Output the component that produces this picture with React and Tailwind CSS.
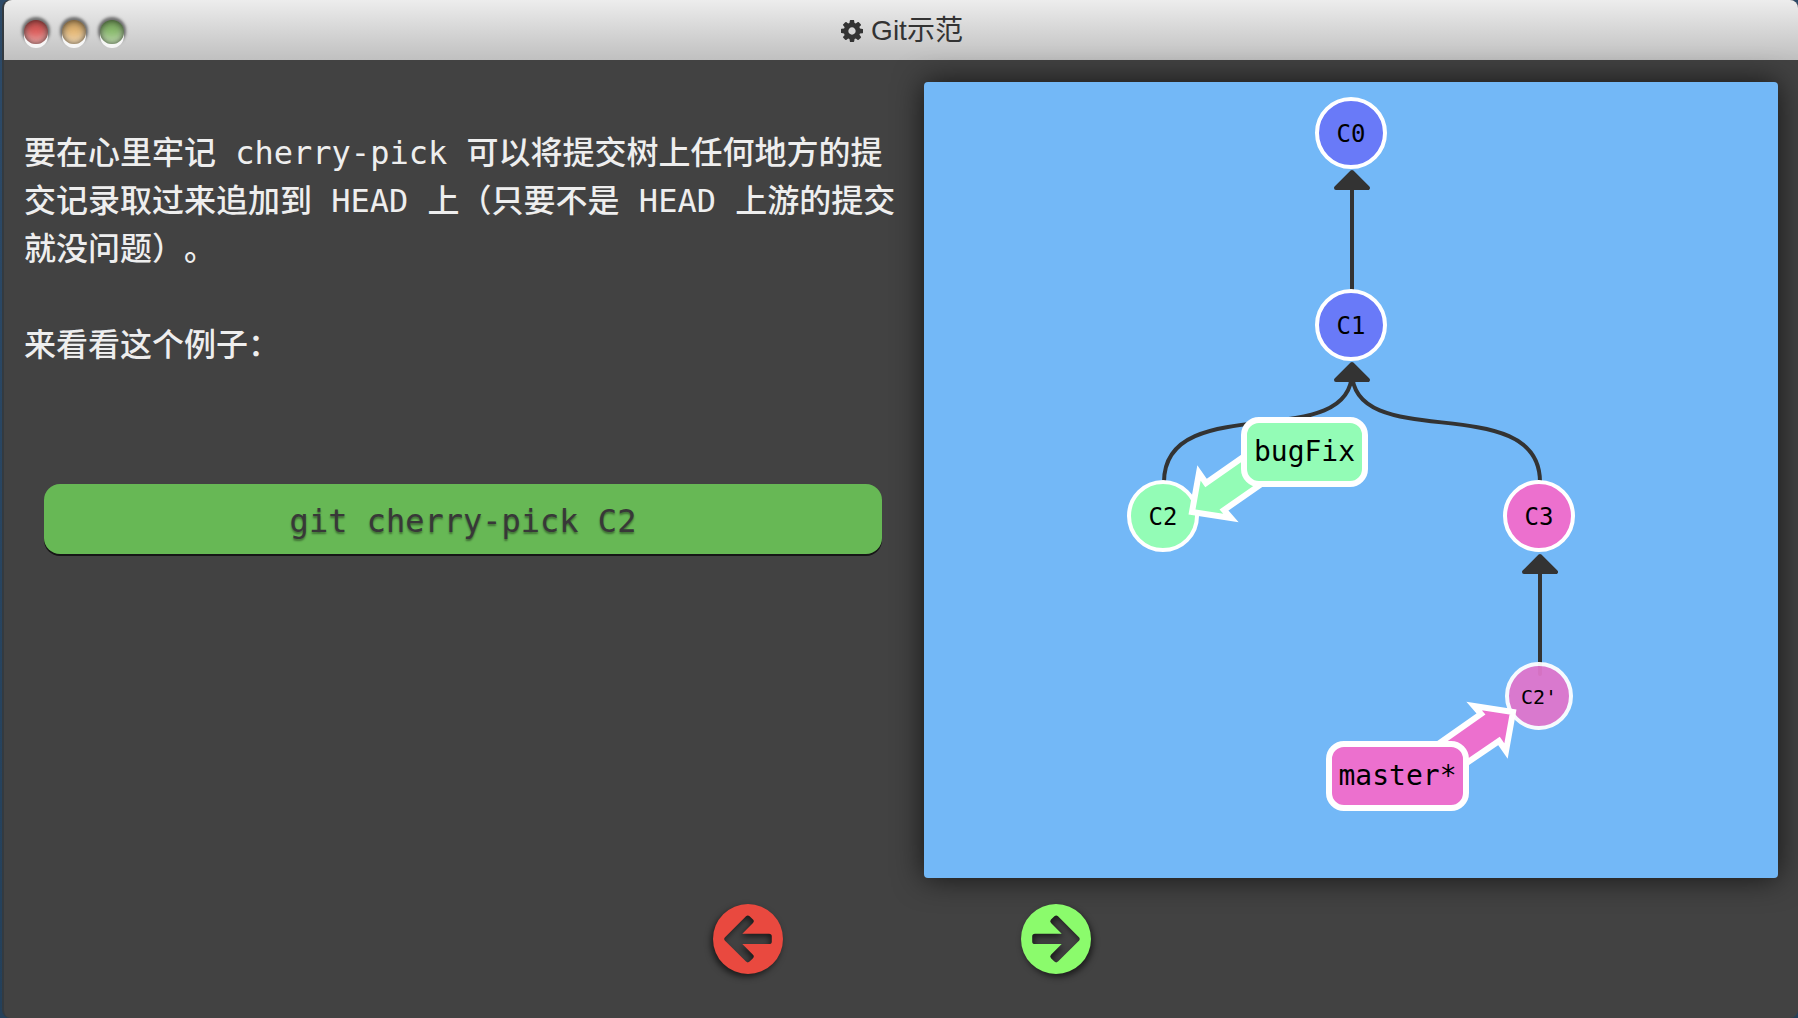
const COG =
  'M1152 896q0-106-75-181t-181-75-181 75-75 181 75 181 181 75 181-75 75-181zm512-109v222q0 12-8 23t-20 13l-185 28q-19 54-39 91 35 50 107 138 10 12 10 25t-9 23q-27 37-99 108t-94 71q-12 0-26-9l-138-108q-44 23-91 38-16 136-29 186-7 28-36 28h-222q-14 0-24.5-8.5t-11.5-21.5l-28-184q-49-16-90-37l-141 107q-10 9-25 9-14 0-25-11-126-114-165-168-7-10-7-23 0-12 8-23 15-21 51-66.5t54-70.5q-27-50-41-99l-183-27q-13-2-21-12.5t-8-23.5v-222q0-12 8-23t19-13l186-28q14-46 39-92-40-57-107-138-10-12-10-24 0-10 9-23 26-36 98.5-107.5t94.5-71.5q13 0 26 10l138 107q44-23 91-38 16-136 29-186 7-28 36-28h222q14 0 24.5 8.5t11.5 21.5l28 184q49 16 90 37l142-107q9-9 24-9 13 0 25 10 129 119 165 170 7 8 7 22 0 12-8 23-15 21-51 66.5t-54 70.5q26 50 41 98l183 28q13 2 21 12.5t8 23.5z';

function WindowDot({ label, color }) {
  return (
    <button
      type="button"
      aria-label={label}
      className={
        'size-6 rounded-full shadow-[0_4px_0_#f6f6f6,0_-1px_3px_2px_rgba(0,0,0,0.5),inset_0_0_5px_rgba(0,0,0,0.45),inset_0_4px_8px_rgba(0,0,0,0.35),inset_0_-7px_7px_rgba(225,225,225,0.45)] ' +
        color
      }
    />
  );
}

function TitleBar() {
  return (
    <header className="grid h-15 grid-cols-[1fr_auto_1fr] items-center rounded-t-lg bg-linear-to-b from-[#ededed] to-[#c0c0c0] px-5">
      <div className="flex items-center gap-[14px] pt-1">
        <WindowDot label="关闭" color="bg-[#e0605e]" />
        <WindowDot label="最小化" color="bg-[#e9bb77]" />
        <WindowDot label="最大化" color="bg-[#8dbf70]" />
      </div>
      <h1 className="flex items-center gap-2 pt-[2px] pl-[2px] font-['Liberation_Sans','Noto_Sans_CJK_SC',sans-serif] text-[28px] leading-8 text-[#333]">
        <svg viewBox="128 128 1536 1536" className="size-[22px]" fill="currentColor" aria-hidden="true">
          <path d={COG} />
        </svg>
        Git示范
      </h1>
    </header>
  );
}

function Commit({ x, y, r = 34, fill, label, size = 24, faded }) {
  return (
    <g>
      <circle cx={x} cy={y} r={r} fill={fill} stroke="#fff" strokeWidth="4" opacity={faded ? 0.94 : 1} />
      <text x={x} y={y + Math.round(size * 0.38)} fontSize={size} textAnchor="middle">
        {label}
      </text>
    </g>
  );
}

function Branch({ x, y, width, fill, arrow, label }) {
  return (
    <g>
      <path d={arrow} fill={fill} stroke="#fff" strokeWidth="6" strokeMiterlimit="6" />
      <rect x={x} y={y} width={width} height="64" rx="15" fill={fill} stroke="#fff" strokeWidth="6" />
      <text x={x + width / 2} y={y + 41} fontSize="28" textAnchor="middle">
        {label}
      </text>
    </g>
  );
}

function CommitTree() {
  return (
    <svg
      viewBox="0 0 854 796"
      role="img"
      aria-label="提交树"
      className="block h-auto w-full rounded bg-[#73b8f7] font-['DejaVu_Sans_Mono',monospace] shadow-[0_0_30px_rgba(0,0,0,0.7)]"
    >
      <g fill="none" stroke="#333" strokeWidth="4" strokeLinecap="round">
        <path d="M428 106V230" />
        <path d="M428 290C428 373 240 306 240 400" />
        <path d="M428 290C428 373 616 306 616 400" />
        <path d="M616 490V592" />
      </g>
      <g fill="#333" stroke="#333" strokeWidth="4" strokeLinejoin="round">
        <path d="M428 90L444 106H412Z" />
        <path d="M428 282L444 298H412Z" />
        <path d="M616 474L632 490H600Z" />
      </g>
      <Commit x={427} y={51} fill="#697af8" label="C0" />
      <Commit x={427} y={243} fill="#697af8" label="C1" />
      <Commit x={239} y={434} fill="#93fcb6" label="C2" />
      <Commit x={615} y={434} fill="#ec70ce" label="C3" />
      <Commit x={615} y={614} r={32} fill="#e076cc" label="C2'" size={20} faded />
      <Branch
        x={320}
        y={338}
        width={121}
        fill="#93fcb6"
        label="bugFix"
        arrow="M345 357L282 401L275 391L268 430L307 436L300 428L362 385Z"
      />
      <Branch
        x={405}
        y={662}
        width={137}
        fill="#ec70ce"
        label="master*"
        arrow="M500 672L557 632L550 624L589 630L582 669L575 659L525 693Z"
      />
    </svg>
  );
}

function ArrowButton({ label, className, flipped }) {
  return (
    <button type="button" aria-label={label} className={className}>
      <svg viewBox="0 0 70 70" className="size-[70px]" fill="currentColor" aria-hidden="true">
        <path
          transform={flipped ? 'matrix(-1 0 0 1 70 0)' : undefined}
          fillRule="evenodd"
          d="M35 0A35 35 0 1 1 35 70A35 35 0 1 1 35 0Z M11.8 33.6L33 12.2Q34.8 10.6 36.6 12.2L40 15.6Q41.6 17.3 40 19L29.3 29.8H56Q58.8 29.8 58.8 32.4V37.4Q58.8 40 56 40H29.3L40 50.8Q41.6 52.5 40 54.2L36.6 57.6Q34.8 59.2 33 57.6L11.8 36.4Q10.6 35 11.8 33.6Z"
        />
      </svg>
    </button>
  );
}

export default function App() {
  return (
    <div className="flex min-h-screen bg-linear-to-b from-[#2d4a68] to-[#24405a] pl-[2px]">
      <div className="flex grow flex-col rounded-lg border-l-2 border-[#333a40] bg-[#424242]">
        <TitleBar />
        <main className="grid grid-cols-2">
          <section className="pt-[69px] pl-5">
            <div className="space-y-12 font-['DejaVu_Sans_Mono','Noto_Sans_CJK_SC',monospace] text-[32px] leading-12 font-medium text-[#eee] [text-spacing-trim:space-all]">
              <p>
                要在心里牢记 cherry-pick 可以将提交树上任何地方的提交记录取过来追加到 HEAD 上（只要不是 HEAD
                上游的提交就没问题）。
              </p>
              <p>来看看这个例子：</p>
            </div>
            <div className="mr-[19px] ml-5 mt-[115px]">
              <button
                type="button"
                className="h-[70px] w-full rounded-2xl bg-[#67b855] pt-1 font-['DejaVu_Sans_Mono',monospace] text-[32px] leading-10 text-[#383838] shadow-[0_2px_0_#161616] [text-shadow:0_2px_2px_rgba(0,0,0,0.4)]"
              >
                git cherry-pick C2
              </button>
            </div>
          </section>
          <section className="pt-[22px] pr-5 pl-[23px]">
            <CommitTree />
          </section>
        </main>
        <nav className="mt-[26px] flex justify-center gap-[238px] pl-[2px]">
          <ArrowButton
            label="上一步"
            className="text-[#e9493f] drop-shadow-[-2px_3px_3px_rgba(0,0,0,0.6)]"
          />
          <ArrowButton
            label="下一步"
            flipped
            className="text-[#8bfb6c] drop-shadow-[2px_3px_3px_rgba(0,0,0,0.6)]"
          />
        </nav>
      </div>
    </div>
  );
}
